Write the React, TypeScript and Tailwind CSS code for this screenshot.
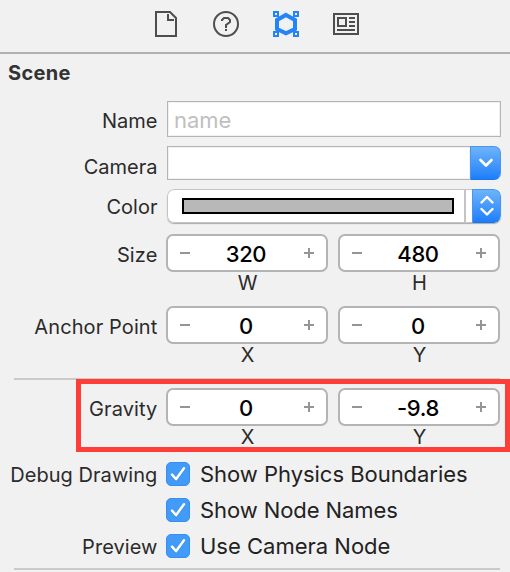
import React from "react";

function Label({ children, className = "" }: { children?: React.ReactNode; className?: string }) {
  return (
    <div className={`w-[158px] shrink-0 whitespace-nowrap pr-[0.6px] text-right text-[20px] text-[#2b2b2b] ${className}`}>
      {children}
    </div>
  );
}

function Stepper({ value, axis }: { value: string; axis: string }) {
  return (
    <div className="flex w-[162px] flex-col">
      <div className="flex h-[38px] items-center justify-between rounded-[7px] border-2 border-[#b4b4b4] bg-white px-3">
        <svg width="10" height="10" viewBox="0 0 10 10" className="shrink-0">
          <path d="M0 5H10" stroke="#959595" strokeWidth="2" />
        </svg>
        <span className="pt-[2px] pr-[2px] text-[22px] leading-[30px] font-[450] tracking-[-0.4px] text-black">{value}</span>
        <svg width="10" height="10" viewBox="0 0 10 10" className="shrink-0">
          <path d="M0 5H10M5 0V10" stroke="#959595" strokeWidth="2" />
        </svg>
      </div>
      <div className="h-[22px] pt-[1px] pl-[1px] text-center text-[20px] leading-[20px] text-[#2b2b2b]">{axis}</div>
    </div>
  );
}

function StepperRow({ label, a, b, axes }: { label: string; a: string; b: string; axes: [string, string] }) {
  return (
    <div className="flex h-[60px]">
      <Label className="pt-1 leading-[35px] tracking-[0.1px]">{label}</Label>
      <div className="ml-2 flex gap-[10px]">
        <Stepper value={a} axis={axes[0]} />
        <Stepper value={b} axis={axes[1]} />
      </div>
    </div>
  );
}

function CheckRow({ label, text, textClass }: { label?: string; text: string; textClass: string }) {
  return (
    <div className="flex h-6 items-center">
      <Label className="pt-[1px] leading-6 tracking-[0.05px]">{label}</Label>
      <div className="ml-2 flex size-6 shrink-0 items-center justify-center rounded-[5px] border border-[#3590f2] bg-[#429bf9]">
        <svg width="22" height="22" viewBox="0 0 22 22" fill="none">
          <path d="M5 12.7L9 17.2L17 6.2" stroke="#2277d8" strokeOpacity=".5" strokeWidth="2.4" strokeLinecap="round" strokeLinejoin="round" />
          <path d="M5 11.7L9 16.2L17 5.2" stroke="#fff" strokeWidth="2.5" strokeLinecap="round" strokeLinejoin="round" />
        </svg>
      </div>
      <span className={`ml-[10px] text-[22px] leading-6 whitespace-nowrap text-[#222] ${textClass}`}>{text}</span>
    </div>
  );
}

function Toolbar() {
  return (
    <div className="flex h-[54px] border-b-2 border-[#b1b1b1] pt-[10px] pl-[154px]">
      <svg width="24" height="28" viewBox="0 0 24 28" fill="none" stroke="#4e4e4e" strokeWidth="2">
        <path d="M2 2H16L22 8V26H2Z" />
        <path d="M14 4V10H20" />
      </svg>
      <svg width="28" height="28" viewBox="0 0 28 28" fill="none" stroke="#4e4e4e" strokeWidth="2" className="ml-[34px]">
        <circle cx="14" cy="14" r="12" />
        <path d="M10 11V10L12 8H16L18 10V12L14 15V18" />
        <path d="M14 19V21" />
      </svg>
      <svg width="28" height="28" viewBox="0 0 28 28" fill="none" className="ml-[32px]">
        <path d="M14 4.9L23 10V19L14 23.3L5 19V10Z" stroke="#2384f9" strokeWidth="4" />
        <g fill="#f1f1f1" stroke="#2384f9" strokeWidth="2">
          <rect x="2" y="2" width="4" height="4" />
          <rect x="22" y="2" width="4" height="4" />
          <rect x="2" y="22" width="4" height="4" />
          <rect x="22" y="22" width="4" height="4" />
        </g>
      </svg>
      <svg width="28" height="28" viewBox="0 0 28 28" fill="none" stroke="#4e4e4e" strokeWidth="2" className="ml-[32px]">
        <path d="M2 4H26V24H2Z" />
        <path d="M6 8H14V16H6Z" />
        <path d="M17 8H23M17 12H23M17 16H23M5 20H23" />
      </svg>
    </div>
  );
}

export default function App() {
  return (
    <div
      className="relative h-[572px] w-[510px] overflow-hidden bg-[#f1f1f1]"
      style={{ fontFamily: 'Inter, "Liberation Sans", sans-serif' }}
    >
      <Toolbar />
      <h2 className="h-[47px] pt-[7px] pl-2 text-[20px] leading-6 font-bold tracking-[0.3px] text-[#333]">Scene</h2>

      <div className="flex h-9">
        <Label className="pt-1 leading-[33px]">Name</Label>
        <div className="ml-[9px] w-[334px] border border-[#b4b4b4] bg-white pt-[1px] pl-[6px] text-[22px] leading-[34px] text-[#bfbfbf] shadow-[inset_0_0_0_1px_#f1f1f1]">
          name
        </div>
      </div>

      <div className="mt-[9px] flex h-[34px]">
        <Label className="pt-[5px] leading-[32px]">Camera</Label>
        <div className="ml-[9px] flex w-[334px]">
          <div className="flex-1 border border-r-0 border-[#b4b4b4] bg-white shadow-[inset_0_0_0_1px_#f1f1f1]" />
          <div className="flex w-[31px] items-center justify-center rounded-r-[7px] border border-[#4a96ee] border-b-[#1c74e8] bg-linear-to-b from-[#6cb3f9] to-[#1a7efc]">
            <svg width="14" height="10" viewBox="0 0 14 10" fill="none" stroke="#fff" strokeWidth="2.6" strokeLinecap="round" strokeLinejoin="round">
              <path d="M1.5 2L7 7.5L12.5 2" />
            </svg>
          </div>
        </div>
      </div>

      <div className="mt-[9px] flex h-[34px]">
        <Label className="pt-[1px] leading-[34px]">Color</Label>
        <div className="ml-[9px] flex w-[334px] overflow-hidden rounded-[7px] bg-white shadow-[0_1px_1px_#aaa]">
          <div className="flex flex-1 items-center rounded-l-[7px] border border-r-0 border-[#c4c4c4] pl-[14px]">
            <div className="h-4 w-[272px] border-2 border-black bg-[#b8b8b8]" />
            <div className="ml-[10px] h-full w-[2px] bg-[#c4c4c4]" />
          </div>
          <div className="flex w-[29px] items-center justify-center rounded-r-[7px] border border-[#4a96ee] border-b-[#1c74e8] bg-linear-to-b from-[#6cb3f9] to-[#1a7efc]">
            <svg width="14" height="22" viewBox="0 0 14 22" fill="none" stroke="#fff" strokeWidth="2.4" strokeLinecap="round" strokeLinejoin="round">
              <path d="M1.5 7.5L7 2L12.5 7.5M1.5 14L7 19.5L12.5 14" />
            </svg>
          </div>
        </div>
      </div>

      <div className="mt-[11px]">
        <StepperRow label="Size" a="320" b="480" axes={["W", "H"]} />
      </div>
      <div className="mt-3">
        <StepperRow label="Anchor Point" a="0" b="0" axes={["X", "Y"]} />
      </div>
      <div className="mt-3 ml-[14px] h-[2px] w-[486px] bg-[#cacaca]" />
      <div className="mt-2">
        <StepperRow label="Gravity" a="0" b="-9.8" axes={["X", "Y"]} />
      </div>

      <div className="mt-[14px] flex flex-col gap-3">
        <CheckRow label="Debug Drawing" text="Show Physics Boundaries" textClass="tracking-[-0.03px]" />
        <CheckRow text="Show Node Names" textClass="tracking-[-0.08px]" />
        <CheckRow label="Preview" text="Use Camera Node" textClass="" />
      </div>
      <div className="mt-[10px] ml-[14px] h-[2px] w-[486px] bg-[#cacaca]" />

      {/* Highlight drawn over the gravity row */}
      <div className="pointer-events-none absolute top-[379px] left-[76px] h-[73px] w-[434px] border-5 border-[#ff3d39]" />
    </div>
  );
}
